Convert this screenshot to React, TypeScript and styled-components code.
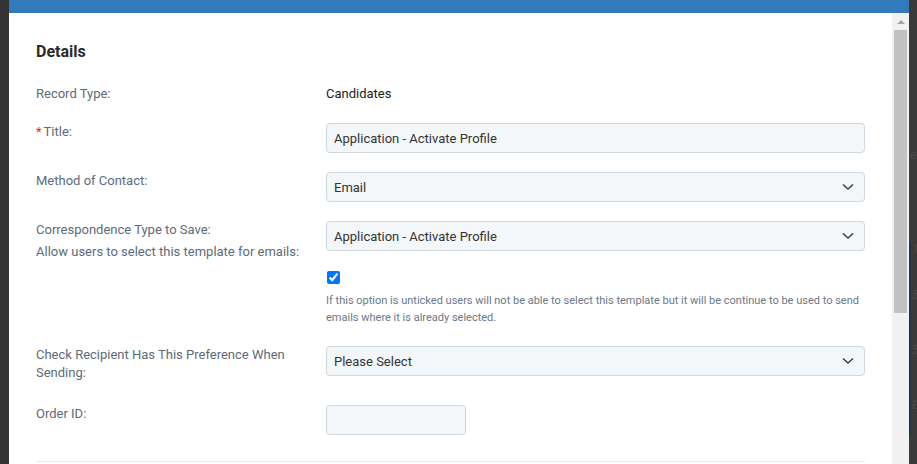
import React from 'react';
import styled, { createGlobalStyle } from 'styled-components';

const GlobalStyle = createGlobalStyle`
  html, body {
    margin: 0;
    padding: 0;
    background: #3a3a3a;
    overflow: hidden;
  }
  * { box-sizing: border-box; }
`;

const Page = styled.div`
  display: flex;
  width: 917px;
  height: 464px;
  font-family: Roboto, "Liberation Sans", sans-serif;
  background: #3a3a3a;
`;

const LeftEdge = styled.div`
  width: 9px;
  background: #333333;
`;

const Modal = styled.div`
  width: 900px;
  display: flex;
  flex-direction: column;
  background: #fff;
`;

const ModalHeader = styled.div`
  height: 13px;
  background: #337abd;
`;

const ModalBody = styled.div`
  flex: 1;
  display: flex;
  overflow: hidden;
`;

const Content = styled.div`
  flex: 1;
  padding: 29px 27px 0 27px;
  overflow: hidden;
`;

const Heading = styled.h3`
  margin: 0;
  font-size: 16px;
  line-height: 20px;
  font-weight: 700;
  color: #2b2b2b;
`;

const Row = styled.div<{ $mt: number }>`
  display: grid;
  grid-template-columns: 290px 1fr;
  align-items: start;
  margin-top: ${p => p.$mt}px;
`;

const Label = styled.div`
  font-size: 13px;
  line-height: 18px;
  color: #5d6b7a;
  padding-right: 20px;
`;

const Required = styled.span`
  color: #c0392b;
  margin-right: 2px;
`;

const Value = styled.div`
  font-size: 13px;
  line-height: 18px;
  color: #222;
`;

const Field = styled.div<{ $pt?: number }>`
  padding-top: ${p => p.$pt || 0}px;
`;

const Input = styled.div<{ $width?: number }>`
  height: 30px;
  width: ${p => (p.$width ? `${p.$width}px` : '100%')};
  display: flex;
  align-items: center;
  justify-content: space-between;
  padding: 0 10px 0 7px;
  background: #f4f7fa;
  border: 1px solid #cfd7df;
  border-radius: 4px;
  font-size: 13px;
  color: #333;
`;

const Check = styled.input`
  width: 13px;
  height: 13px;
  margin: 0 0 0 1px;
  display: block;
  accent-color: #0075ff;
`;

const Help = styled.p`
  margin: 8px 0 0 0;
  font-size: 11px;
  line-height: 17px;
  color: #6b7886;
`;

const Divider = styled.hr`
  margin: 26px 0 0 0;
  border: 0;
  border-top: 1px solid #e6e9ec;
`;

const Scrollbar = styled.div`
  width: 17px;
  background: #f1f1f1;
  display: flex;
  flex-direction: column;
  align-items: center;
  padding-top: 7px;
`;

const Arrow = styled.div`
  width: 0;
  height: 0;
  border-left: 4px solid transparent;
  border-right: 4px solid transparent;
  border-bottom: 4px solid #a3a3a3;
`;

const Thumb = styled.div`
  margin-top: 6px;
  width: 13px;
  height: 283px;
  background: #c1c1c1;
`;

// background page that peeks out beside the modal
const RightEdge = styled.div`
  width: 8px;
  display: flex;
  flex-direction: column;
  padding-top: 148px;
  overflow: hidden;
`;

const Peek = styled.div<{ $h: number; $bar?: boolean }>`
  height: ${p => p.$h}px;
  font-size: 12px;
  color: #4a4a4a;
  border-left: ${p => (p.$bar ? '2px solid #1e3a40' : 'none')};
  padding-left: 1px;
  line-height: 14px;
  white-space: nowrap;
  overflow: hidden;
`;

const Chevron = () => (
  <svg width="12" height="8" viewBox="0 0 12 8">
    <path d="M1 1.5 L6 6 L11 1.5" fill="none" stroke="#2f4a4a" strokeWidth="1.6" />
  </svg>
);

export default function App() {
  return (
    <Page>
      <GlobalStyle />
      <LeftEdge />
      <Modal>
        <ModalHeader />
        <ModalBody>
          <Content>
            <Heading>Details</Heading>
            <Row $mt={23}>
              <Label>Record Type:</Label>
              <Value>Candidates</Value>
            </Row>
            <Row $mt={20}>
              <Label><Required>*</Required>Title:</Label>
              <Input>Application - Activate Profile</Input>
            </Row>
            <Row $mt={19}>
              <Label>Method of Contact:</Label>
              <Input>Email<Chevron /></Input>
            </Row>
            <Row $mt={19}>
              <Label>Correspondence Type to Save:</Label>
              <Input>Application - Activate Profile<Chevron /></Input>
            </Row>
            <Row $mt={-8}>
              <Label>Allow users to select this template for emails:</Label>
              <Field $pt={28}>
                <Check type="checkbox" checked readOnly />
                <Help>
                  If this option is unticked users will not be able to select this template but it will be continue to be used to send
                  emails where it is already selected.
                </Help>
              </Field>
            </Row>
            <Row $mt={20}>
              <Label>Check Recipient Has This Preference When Sending:</Label>
              <Input>Please Select<Chevron /></Input>
            </Row>
            <Row $mt={23}>
              <Label>Order ID:</Label>
              <Input $width={140} />
            </Row>
            <Divider />
          </Content>
          <Scrollbar>
            <Arrow />
            <Thumb />
          </Scrollbar>
        </ModalBody>
      </Modal>
      <RightEdge>
        <Peek $h={94}>ed</Peek>
        <Peek $h={46} $bar>17</Peek>
        <Peek $h={55} $bar>5</Peek>
        <Peek $h={55} $bar>5</Peek>
        <Peek $h={40} $bar>8</Peek>
      </RightEdge>
    </Page>
  );
}
